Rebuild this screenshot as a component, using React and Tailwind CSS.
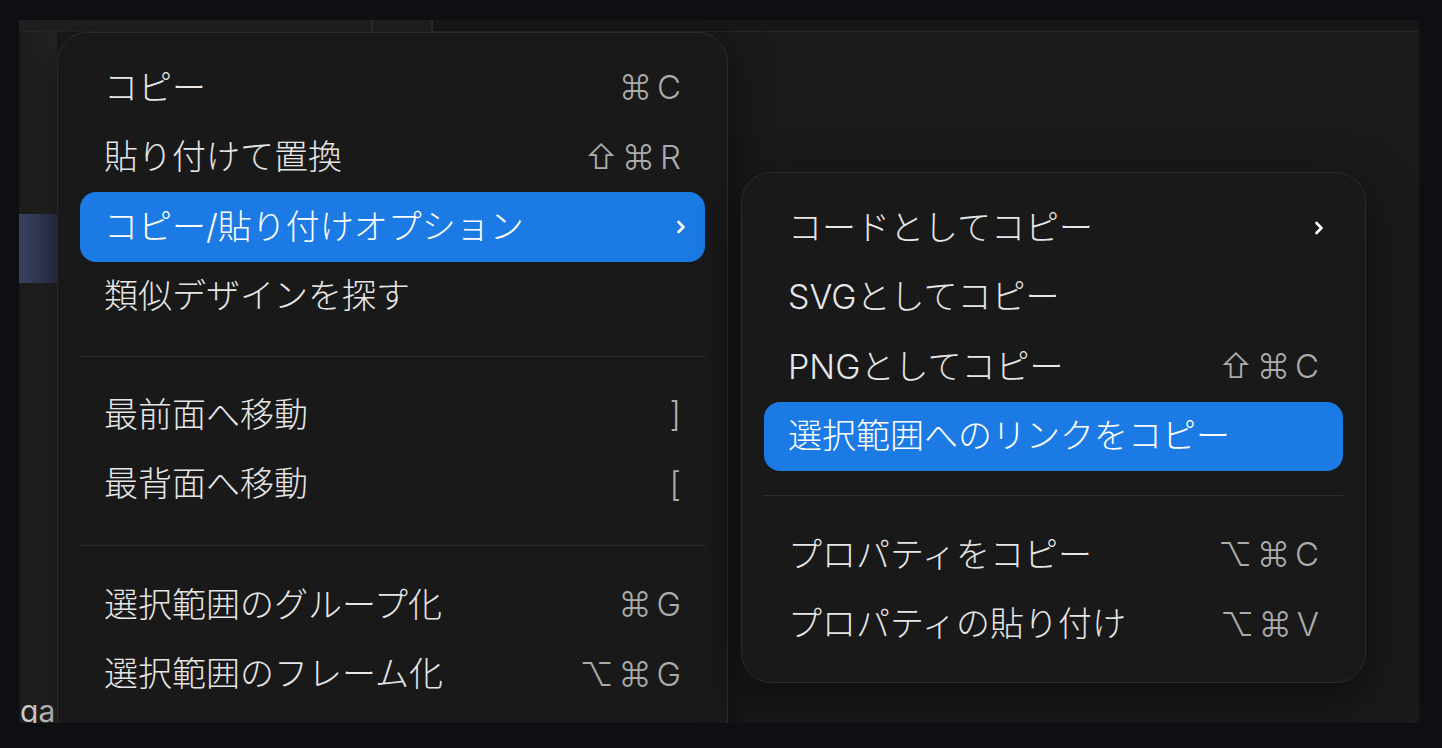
import React from "react";

const mainItems = [
  [
    { label: "コピー", keys: ["⌘", "C"] },
    { label: "貼り付けて置換", keys: ["⇧", "⌘", "R"] },
    { label: "コピー/貼り付けオプション", submenu: true, active: true },
    { label: "類似デザインを探す" },
  ],
  [
    { label: "最前面へ移動", keys: ["]"] },
    { label: "最背面へ移動", keys: ["["] },
  ],
  [
    { label: "選択範囲のグループ化", keys: ["⌘", "G"] },
    { label: "選択範囲のフレーム化", keys: ["⌥", "⌘", "G"] },
  ],
];

const subItems = [
  [
    { label: "コードとしてコピー", submenu: true },
    { label: "SVGとしてコピー" },
    { label: "PNGとしてコピー", keys: ["⇧", "⌘", "C"] },
    { label: "選択範囲へのリンクをコピー", active: true },
  ],
  [
    { label: "プロパティをコピー", keys: ["⌥", "⌘", "C"] },
    { label: "プロパティの貼り付け", keys: ["⌥", "⌘", "V"] },
  ],
];

const Chevron = () => (
  <svg width="12" height="16" viewBox="0 0 12 16" className="-mr-[6px]">
    <path
      d="M3.5 3 L8.5 8 L3.5 13"
      fill="none"
      stroke="currentColor"
      strokeWidth="2.6"
      strokeLinecap="round"
      strokeLinejoin="round"
    />
  </svg>
);

const Shortcut = ({ keys }) => (
  <div className="flex items-center gap-[5px] text-[33px] font-light text-[#ababab] font-['Inter','DejaVu_Sans',sans-serif]">
    {keys.map((k, i) => (
      <span key={i}>{k}</span>
    ))}
  </div>
);

const MenuItem = ({ item }) => (
  <div
    className={`h-[69.5px] flex items-center justify-between pl-[24px] pr-[24px] rounded-[16px] ${
      item.active ? "bg-[#1b7ae4] text-white" : "text-[#e6e6e6]"
    }`}
  >
    <span className="text-[34px] font-light leading-none whitespace-nowrap">{item.label}</span>
    {item.keys && <Shortcut keys={item.keys} />}
    {item.submenu && (
      <span className="text-white">
        <Chevron />
      </span>
    )}
  </div>
);

const Separator = ({ className }) => (
  <div className={`h-px bg-[#2d2d2d] ${className}`} />
);

const App = () => {
  return (
    <div className="w-[1442px] h-[748px] bg-[#0d0f13] pt-[20px] pl-[19px] font-['Inter','Noto_Sans_CJK_JP',sans-serif]">
      <div className="relative w-[1400px] h-[703px] bg-[#1a1a1a] overflow-hidden flex flex-col">
        {/* toolbar strip */}
        <div className="h-[12px] flex border-b border-[#272727] shrink-0">
          <div className="w-[352px] bg-[#202020]" />
          <div className="w-[2px] bg-[#2e2e2e]" />
          <div className="w-[58px] bg-[#202020]" />
          <div className="w-[2px] bg-[#2e2e2e]" />
          <div className="flex-1 bg-[#171717]" />
        </div>

        <div className="flex flex-1">
          {/* layers column */}
          <div className="w-[38px] bg-gradient-to-r from-[#1c1c1c] to-[#252525] flex flex-col">
            <div className="h-[182px]" />
            <div className="h-[69px] bg-gradient-to-r from-[#3a4262] to-[#2e354f]" />
          </div>
          <div className="flex-1 bg-[#1a1a1a]" />
        </div>

        <div className="absolute left-[1px] top-[676px] text-[30px] leading-none text-[#d2d2d2]">
          ga
        </div>

        {/* main context menu */}
        <div className="absolute left-[38px] top-[12px] w-[671px] h-[740px] bg-[#191919] border border-[#2b2b2b] rounded-[30px] px-[22px] pt-[20px] shadow-[0_12px_40px_rgba(0,0,0,0.55)]">
          {mainItems.map((group, gi) => (
            <div key={gi}>
              {gi === 1 && <Separator className="mt-[25px] mb-[23px]" />}
              {gi === 2 && <Separator className="mt-[26px] mb-[24px]" />}
              {group.map((item) => (
                <MenuItem key={item.label} item={item} />
              ))}
            </div>
          ))}
        </div>

        {/* submenu */}
        <div className="absolute left-[722px] top-[152px] w-[625px] h-[511px] bg-[#191919] border border-[#2b2b2b] rounded-[30px] px-[22px] pt-[20px] shadow-[0_16px_48px_rgba(0,0,0,0.5)]">
          {subItems.map((group, gi) => (
            <div key={gi}>
              {gi === 1 && <Separator className="mt-[24px] mb-[24px]" />}
              {group.map((item) => (
                <MenuItem key={item.label} item={item} />
              ))}
            </div>
          ))}
        </div>
      </div>
    </div>
  );
};

export default App;
